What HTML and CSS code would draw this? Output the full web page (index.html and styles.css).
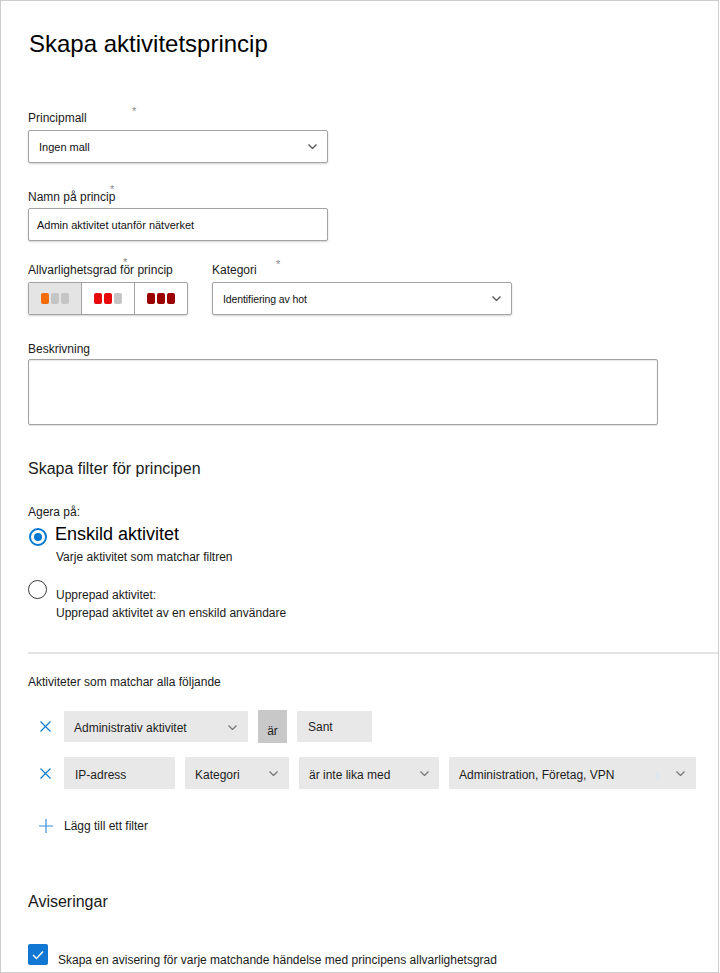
FILE: index.html
```html
<!DOCTYPE html>
<html lang="sv">
<head>
<meta charset="utf-8">
<title>Skapa aktivitetsprincip</title>
<link rel="stylesheet" href="styles.css">
</head>
<body>
<div class="page">
  <h1 class="title">Skapa aktivitetsprincip</h1>

  <div class="label lbl-mall">Principmall<span class="req req-mall">*</span></div>
  <div class="select w300">
    <span class="val">Ingen mall</span>
    <svg class="chev" width="9" height="5" viewBox="0 0 9 5"><path d="M0.5 0.5 L4.5 4.5 L8.5 0.5" fill="none" stroke="#555" stroke-width="1.3"/></svg>
  </div>

  <div class="label lbl-namn">Namn på princip<span class="req req-namn">*</span></div>
  <div class="input w300"><span class="val">Admin aktivitet utanför nätverket</span></div>

  <div class="sev-row">
    <div class="sev-col">
      <div class="label">Allvarlighetsgrad för princip<span class="req req-sev">*</span></div>
      <div class="sev">
        <div class="seg seg-on">
          <span class="sq orange"></span><span class="sq grey"></span><span class="sq grey"></span>
        </div>
        <div class="seg">
          <span class="sq red"></span><span class="sq red"></span><span class="sq grey"></span>
        </div>
        <div class="seg">
          <span class="sq dark"></span><span class="sq dark"></span><span class="sq dark"></span>
        </div>
      </div>
    </div>
    <div class="kat-col">
      <div class="label">Kategori<span class="req req-kat">*</span></div>
      <div class="select w300 kat">
        <span class="val narrow">Identifiering av hot</span>
        <svg class="chev" width="9" height="5" viewBox="0 0 9 5"><path d="M0.5 0.5 L4.5 4.5 L8.5 0.5" fill="none" stroke="#555" stroke-width="1.3"/></svg>
      </div>
    </div>
  </div>

  <div class="label lbl-besk">Beskrivning</div>
  <div class="textarea"></div>

  <h2 class="section filter-head">Skapa filter för principen</h2>

  <div class="label agera">Agera på:</div>

  <div class="radio-opt opt1">
    <span class="radio radio-on"><span class="dot"></span></span>
    <div class="radio-text">
      <div class="radio-title big">Enskild aktivitet</div>
      <div class="radio-desc d1">Varje aktivitet som matchar filtren</div>
    </div>
  </div>

  <div class="radio-opt opt2">
    <span class="radio"></span>
    <div class="radio-text t2">
      <div class="radio-title">Upprepad aktivitet:</div>
      <div class="radio-desc d2">Upprepad aktivitet av en enskild användare</div>
    </div>
  </div>

  <div class="divider"></div>

  <div class="label match">Aktiviteter som matchar alla följande</div>

  <div class="frow row1">
    <svg class="x" width="11" height="11" viewBox="0 0 11 11"><path d="M0.5 0.5 L10.5 10.5 M10.5 0.5 L0.5 10.5" stroke="#0078d4" stroke-width="1.1"/></svg>
    <div class="fbox w184"><span>Administrativ aktivitet</span>
      <svg class="fchev" width="9" height="5" viewBox="0 0 9 5"><path d="M0.5 0.5 L4.5 4.5 L8.5 0.5" fill="none" stroke="#777" stroke-width="1.3"/></svg>
    </div>
    <div class="fbox op">är</div>
    <div class="fbox w75 sant">Sant</div>
  </div>

  <div class="frow row2">
    <svg class="x" width="11" height="11" viewBox="0 0 11 11"><path d="M0.5 0.5 L10.5 10.5 M10.5 0.5 L0.5 10.5" stroke="#0078d4" stroke-width="1.1"/></svg>
    <div class="fbox w111"><span>IP-adress</span></div>
    <div class="fbox w104"><span>Kategori</span>
      <svg class="fchev" width="9" height="5" viewBox="0 0 9 5"><path d="M0.5 0.5 L4.5 4.5 L8.5 0.5" fill="none" stroke="#777" stroke-width="1.3"/></svg>
    </div>
    <div class="fbox w140"><span>är inte lika med</span>
      <svg class="fchev" width="9" height="5" viewBox="0 0 9 5"><path d="M0.5 0.5 L4.5 4.5 L8.5 0.5" fill="none" stroke="#777" stroke-width="1.3"/></svg>
    </div>
    <div class="fbox w247"><span>Administration, Företag, VPN</span>
      <span class="sep"></span>
      <svg class="fchev" width="9" height="5" viewBox="0 0 9 5"><path d="M0.5 0.5 L4.5 4.5 L8.5 0.5" fill="none" stroke="#777" stroke-width="1.3"/></svg>
    </div>
  </div>

  <div class="add">
    <svg class="plus" width="14" height="14" viewBox="0 0 14 14"><path d="M7 0 V14 M0 7 H14" stroke="#3a8fdc" stroke-width="1.2"/></svg>
    <span>Lägg till ett filter</span>
  </div>

  <h2 class="section avis">Aviseringar</h2>

  <div class="check-row">
    <span class="check">
      <svg width="12" height="10" viewBox="0 0 12 10"><path d="M1 5 L4.5 8.5 L11 1.5" fill="none" stroke="#fff" stroke-width="1.4"/></svg>
    </span>
    <span class="check-label">Skapa en avisering för varje matchande händelse med principens allvarlighetsgrad</span>
  </div>
</div>
</body>
</html>
```

FILE: styles.css
```css
* { box-sizing: border-box; }

html, body {
  margin: 0;
  padding: 0;
  background: #fff;
}

body {
  font-family: "Liberation Sans", Arial, sans-serif;
  color: #1b1b1b;
}

.page {
  width: 719px;
  height: 973px;
  border: 1px solid #cdcdcd;
  padding: 29px 0 0 27px;
  overflow: hidden;
}

.title {
  margin: 0 0 0 1px;
  font-size: 24px;
  line-height: 28px;
  font-weight: normal;
  color: #000;
}

.label {
  position: relative;
  font-size: 12px;
  line-height: 16px;
  height: 16px;
  color: #1a1a1a;
  white-space: nowrap;
}

.req {
  position: absolute;
  top: -5px;
  font-size: 11px;
  line-height: 12px;
  color: #8a8a8a;
}
.req-mall { left: 104px; }
.req-namn { left: 82px; top: -6px; }
.req-sev { left: 95px; top: -6px; }
.req-kat { left: 64px; top: -4px; }

.lbl-mall { margin-top: 52px; }
.lbl-namn { margin-top: 26px; }

.w300 { width: 300px; }

.select, .input {
  height: 33px;
  border: 1px solid #a3a3a3;
  border-radius: 2px;
  box-shadow: 0 1px 2px rgba(0, 0, 0, 0.18);
  background: #fff;
  display: flex;
  align-items: center;
  padding: 0 10px;
}

.select { margin-top: 4px; justify-content: space-between; }
.input { margin-top: 3px; padding-left: 8px; }

.val {
  font-size: 11px;
  line-height: 14px;
  color: #111;
}
.val.narrow { font-size: 10.5px; letter-spacing: -0.1px; }

.chev { flex: none; }

.sev-row {
  margin-top: 21px;
  display: flex;
  gap: 24px;
}
.sev-col { width: 160px; }
.sev {
  margin-top: 4px;
  height: 33px;
  width: 160px;
  display: flex;
  border: 1px solid #a3a3a3;
  border-radius: 2px;
  box-shadow: 0 1px 2px rgba(0, 0, 0, 0.18);
  background: #fff;
}
.seg {
  flex: 1;
  display: flex;
  align-items: center;
  justify-content: center;
  gap: 2px;
}
.seg + .seg { border-left: 1px solid #a3a3a3; }
.seg-on { background: #e4e4e4; }
.sq {
  width: 8px;
  height: 11px;
  border-radius: 2px;
}
.orange { background: #f46b0a; }
.grey { background: #c5c5c5; }
.red { background: #e80a0a; }
.dark { background: #9b0000; }

.kat { margin-top: 4px; }

.lbl-besk { margin-top: 26px; }

.textarea {
  margin-top: 2px;
  width: 630px;
  height: 66px;
  border: 1px solid #a3a3a3;
  border-radius: 2px;
  box-shadow: inset 0 1px 2px rgba(0, 0, 0, 0.1), 0 1px 1px rgba(0, 0, 0, 0.12);
}

.section {
  margin: 0;
  font-size: 16px;
  line-height: 20px;
  font-weight: normal;
  color: #1a1a1a;
}
.filter-head { margin-top: 34px; }

.agera { margin-top: 25px; }

.radio-opt {
  display: flex;
  align-items: flex-start;
}
.opt1 { margin-top: 3px; }
.opt2 { margin-top: 15px; }

.radio {
  flex: none;
  width: 19px;
  height: 19px;
  border-radius: 50%;
  border: 1.5px solid #3a3a3a;
}
.radio-on {
  margin-top: 5px;
  margin-left: 1px;
  width: 18px;
  height: 18px;
  border: 2px solid #0078d4;
  display: flex;
  align-items: center;
  justify-content: center;
}
.dot {
  width: 8px;
  height: 8px;
  border-radius: 50%;
  background: #0078d4;
}

.radio-text { margin-left: 8px; }
.t2 { margin-top: 7px; margin-left: 9px; }

.radio-title {
  font-size: 12px;
  line-height: 16px;
  color: #1a1a1a;
}
.radio-title.big {
  font-size: 18px;
  line-height: 22px;
  color: #000;
}
.radio-desc {
  font-size: 12px;
  line-height: 16px;
  color: #1a1a1a;
}
.d1 { margin-top: 4px; margin-left: 1px; }
.d2 { margin-top: 2px; }

.divider {
  margin-top: 31px;
  height: 2px;
  background: #e3e3e3;
}

.match { margin-top: 20px; }

.frow {
  display: flex;
  align-items: center;
  gap: 10px;
  padding-left: 12px;
}
.row1 { margin-top: 20px; height: 33px; }
.row2 { margin-top: 14px; height: 32px; }

.x { flex: none; margin-right: 3px; }

.fbox {
  height: 31px;
  background: #e8e8e8;
  font-size: 12px;
  line-height: 16px;
  color: #1e1e1e;
  display: flex;
  align-items: center;
  justify-content: space-between;
  padding: 2px 11px 0 10px;
  white-space: nowrap;
}
.row2 .fbox { height: 32px; padding-top: 4px; }
.row2 .fbox .fchev { margin-top: -4px; }
.fchev { flex: none; }

.w184 { width: 184px; }
.w75 { width: 75px; }
.w111 { width: 111px; padding-left: 11px; }
.w104 { width: 104px; }
.w140 { width: 140px; padding-right: 10px; }
.w247 { width: 247px; }

.op {
  width: 29px;
  height: 33px;
  background: #c8c8c8;
  padding: 8px 0 0 0;
  justify-content: center;
}
.sant { padding-top: 0; padding-left: 11px; }

.sep {
  margin-left: auto;
  margin-right: 18px;
  width: 1px;
  height: 9px;
  background: #d5e6f2;
}

.add {
  margin-top: 29px;
  height: 16px;
  display: flex;
  align-items: center;
  padding-left: 11px;
  font-size: 12px;
  color: #1a1a1a;
}
.plus { flex: none; margin-right: 11px; }

.avis { margin-top: 58px; }

.check-row {
  margin-top: 32px;
  display: flex;
  align-items: flex-end;
  height: 21px;
}
.check {
  flex: none;
  width: 20px;
  height: 21px;
  border-radius: 2px;
  background: #1277d2;
  display: flex;
  align-items: center;
  justify-content: center;
}
.check-label {
  margin-left: 10px;
  margin-bottom: -3px;
  font-size: 12px;
  line-height: 16px;
  white-space: nowrap;
  color: #1a1a1a;
}
```
